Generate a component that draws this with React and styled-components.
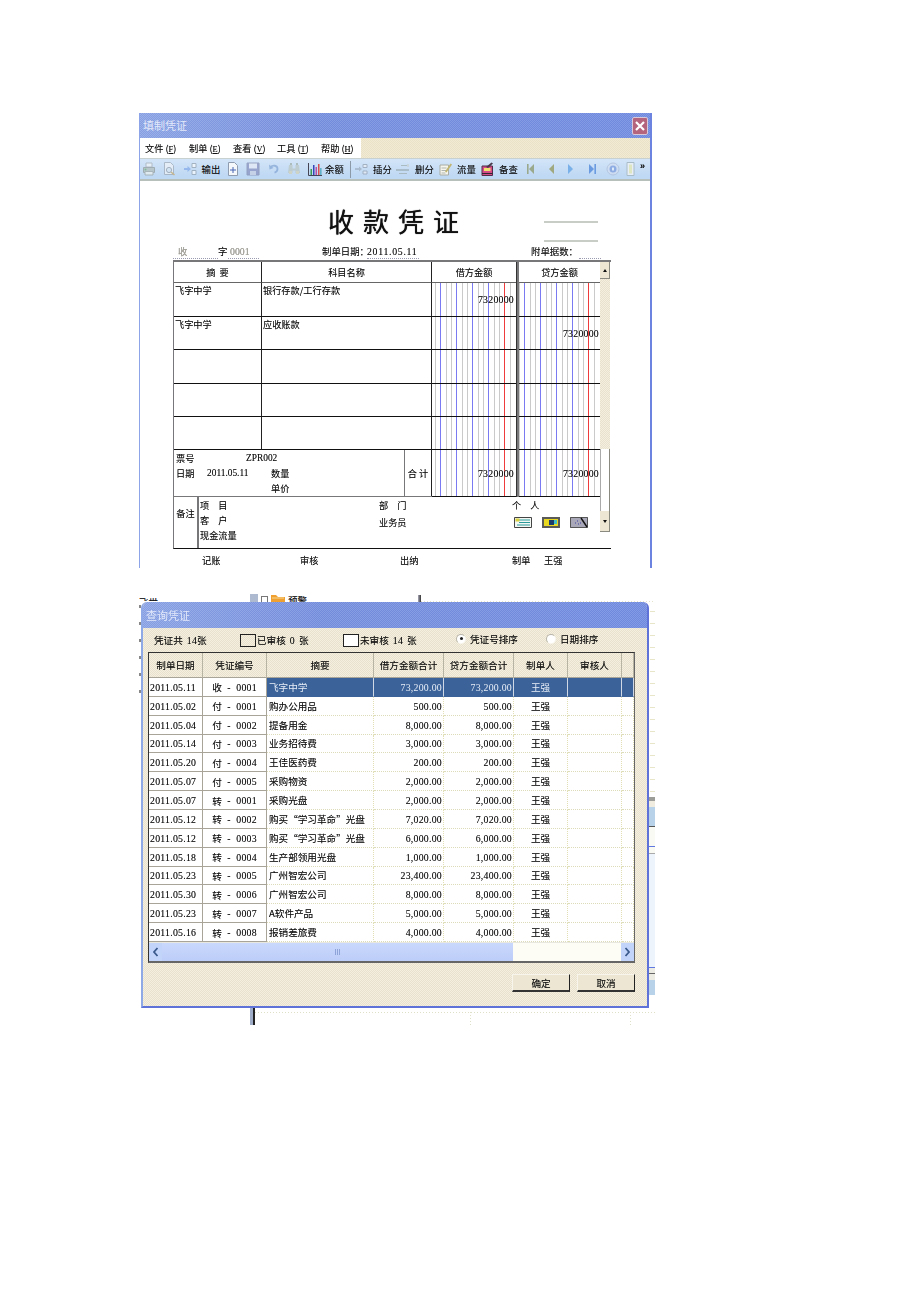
import React from 'react';
import styled, { createGlobalStyle } from 'styled-components';

const SANS = '"Noto Sans CJK SC", "Liberation Sans", sans-serif';
const NUM = '"Liberation Serif", "Noto Sans CJK SC", serif';
const BEIGE = 'repeating-conic-gradient(#f4efde 0 25%, #e7e1cd 0 50%) 0 0 / 2px 2px';
const TITLE_BLUE = 'repeating-conic-gradient(rgba(255,255,255,.10) 0 25%, rgba(40,60,170,.08) 0 50%) 0 0 / 2px 2px, linear-gradient(90deg, #8fa8e6, #7a93e0 35%, #7590e2)';

const GlobalStyle = createGlobalStyle`
  html, body { margin: 0; padding: 0; background: #fff; }
  body { font-family: ${SANS}; color: #111; text-shadow: 0 0 .5px rgba(0,0,0,.45); }
`;

const Page = styled.div`
  width: 920px;
  height: 1302px;
  box-sizing: border-box;
  padding: 113px 0 0 139px;
  background: #fff;
  overflow: hidden;
`;

/* ---------- first window ---------- */

const VoucherWindow = styled.div`
  width: 513px;
  height: 455px;
  box-sizing: border-box;
  display: flex;
  flex-direction: column;
  border-left: 1px solid #8ea4e8;
  border-right: 2px solid #6c84e0;
  overflow: hidden;
  filter: blur(0.3px);
`;

const TitleBar = styled.div`
  height: 25px;
  flex: none;
  display: flex;
  align-items: center;
  justify-content: space-between;
  padding: 0 2px 0 3px;
  background: ${TITLE_BLUE};
`;

const TitleText = styled.span`
  font-size: 11px;
  color: #e3e9fa;
  line-height: 1;
  text-shadow: none;
`;

const CloseBox = styled.div`
  width: 16px;
  height: 18px;
  display: flex;
  align-items: center;
  justify-content: center;
  background: #b4657d;
  border: 1px solid #d8c8d8;
  border-radius: 2px;
  box-sizing: border-box;
`;

const MenuBar = styled.div`
  height: 20px;
  flex: none;
  display: flex;
  background: repeating-conic-gradient(#f2ead2 0 25%, #e9e2c8 0 50%) 0 0 / 2px 2px;
`;

const MenuItems = styled.div`
  width: 221px;
  display: flex;
  align-items: center;
  padding-left: 5px;
  box-sizing: border-box;
  background: #fff;
  overflow: hidden;
`;

const MenuItem = styled.span`
  width: 44px;
  flex: none;
  font-size: 9.2px;
  white-space: nowrap;
  u { font: 8.4px ${NUM}; }
`;

const Toolbar = styled.div`
  height: 23px;
  flex: none;
  display: flex;
  align-items: center;
  box-sizing: border-box;
  background: linear-gradient(#d3e5f8, #bfd8f3 85%);
  border-bottom: 2px solid #b8c0bc;
  border-top: 1px solid #c8d0d0;
`;

const Tool = styled.div`
  width: ${p => p.$w}px;
  flex: none;
  display: flex;
  align-items: center;
  justify-content: center;
  gap: ${p => p.$gap ?? 5}px;
  font-size: 9.4px;
  white-space: nowrap;
  svg { opacity: ${p => (p.$soft ? 0.65 : 1)}; }
`;

const ToolSep = styled.div`
  width: 8px;
  height: 17px;
  flex: none;
  display: flex;
  justify-content: center;
  &::before { content: ''; width: 1px; background: #8c9aa8; }
`;

const Chevrons = styled.span`
  font: bold 9px "Liberation Sans", sans-serif;
  margin: -6px 0 0 1px;
`;

const VoucherBody = styled.div`
  flex: 1;
  padding-left: 33px;
  background: #fff;
`;

const HeadRow = styled.div`
  width: 438px;
  height: 62px;
  display: grid;
  grid-template-columns: 1fr auto 1fr;
`;

const Heading = styled.h1`
  grid-column: 2;
  margin: 21px 0 0 12px;
  font-size: 26px;
  line-height: 38px;
  font-weight: 400;
  letter-spacing: 9px;
  white-space: nowrap;
  text-shadow: 0 0 .8px #000;
`;

const RuleStack = styled.div`
  justify-self: end;
  margin: 40px 13px 0 0;
  width: 54px;
  display: flex;
  flex-direction: column;
  gap: 17px;
`;

const Rule = styled.div`
  height: 2px;
  background: #c8cec6;
`;

const MetaRow = styled.div`
  height: 17px;
  width: 438px;
  display: flex;
  align-items: center;
  font-size: 9.4px;
`;

const Field = styled.span`
  flex: none;
  width: ${p => p.$w}px;
  height: 14px;
  margin-left: ${p => p.$ml || 0}px;
  font-family: ${p => (p.$num ? NUM : SANS)};
  font-size: ${p => (p.$num ? '9.8px' : '9.4px')};
  letter-spacing: ${p => (p.$spread ? '.7px' : '0')};
  color: ${p => (p.$muted ? '#a8a69c' : '#111')};
  border-bottom: ${p => (p.$line ? '1px dotted #9a9ab0' : '1px solid transparent')};
  padding-left: ${p => p.$pl || 0}px;
  box-sizing: border-box;
  white-space: nowrap;
  line-height: 13px;
`;

const VoucherTable = styled.div`
  width: 438px;
  box-sizing: border-box;
  display: grid;
  grid-template-columns: 88px 170px 84px 3px 81px 10px;
  grid-template-rows: 21px 34px 33px 34px 33px 33px 47px 51px;
  border-top: 2px solid #77777a;
  border-left: 1px solid #77777a;
  border-bottom: 1px solid #111;
  font-size: 9.2px;
  line-height: 12px;
`;

const HeadCell = styled.div`
  display: flex;
  align-items: center;
  justify-content: center;
  border-bottom: 1px solid #666;
  border-right: ${p => (p.$open ? '0' : '1px solid #222')};
  white-space: pre;
`;

const TextCell = styled.div`
  grid-column: ${p => p.$col};
  grid-row: ${p => p.$row};
  padding: 1px 0 0 1px;
  border-bottom: 1px solid #111;
  border-right: 1px solid #222;
  white-space: nowrap;
`;

const Ruled = styled.div`
  grid-column: ${p => p.$col};
  grid-row: ${p => p.$row};
  position: relative;
  display: flex;
  align-items: center;
  justify-content: flex-end;
  padding-right: ${p => p.$pr}px;
  border-bottom: 1px solid #111;
  font: 9.8px ${NUM};
  letter-spacing: .25px;
`;

const RulingSvg = styled.svg`
  position: absolute;
  inset: 0;
  width: 100%;
  height: 100%;
`;

const Amount = styled.span`
  position: relative;
`;

// every 16px one blue line and two grey ones, the red one replaces the fifth blue
const Ruling = ({ o }) => {
  const lines = [];
  for (let x = o; x < 84; x += 16) {
    lines.push([x - 5, '#cacaca'], [x + 6, '#cacaca']);
    lines.push([x, x === o + 64 ? '#ef3b3b' : '#7a7af2']);
  }
  return (
    <RulingSvg shapeRendering="crispEdges">
      {lines.map(([x, c], i) => <line key={i} x1={x + 0.5} x2={x + 0.5} y1="0" y2="100%" stroke={c} />)}
    </RulingSvg>
  );
};

const MoneyCell = ({ o, pr, col, row, children }) => (
  <Ruled $pr={pr} $col={col} $row={row}>
    <Ruling o={o} />
    <Amount>{children}</Amount>
  </Ruled>
);

const Gutter = styled.div`
  grid-column: 4;
  grid-row: ${p => p.$row};
  background: #77777a;
  border-left: 1px solid #333;
`;

const VScroll = styled.div`
  grid-column: 6;
  grid-row: 1 / span 8;
  height: 270px;
  display: flex;
  flex-direction: column;
`;

const VArrow = styled.div`
  flex: none;
  height: ${p => p.$h}px;
  display: flex;
  align-items: center;
  justify-content: center;
  background: #ece6d2;
  border-right: 1px solid #8a8a80;
  border-bottom: 1px solid #8a8a80;
  &::before {
    content: '';
    border-left: 2.5px solid transparent;
    border-right: 2.5px solid transparent;
    ${p => (p.$up ? 'border-bottom: 3px solid #111;' : 'border-top: 3px solid #111;')}
  }
`;

const VTrack = styled.div`
  flex: ${p => (p.$fill ? 1 : 'none')};
  height: ${p => (p.$fill ? 'auto' : '170px')};
  background: ${p => (p.$fill ? '#fff' : BEIGE)};
  border-right: ${p => (p.$fill ? '1px solid #8a8a80' : '0')};
  border-left: ${p => (p.$fill ? '1px solid #aaa' : '0')};
`;

const TotalInfo = styled.div`
  grid-column: 1 / span 2;
  grid-row: 7;
  display: grid;
  grid-template-columns: 231px 1fr;
  border-bottom: 1px solid #77777a;
`;

const TicketBox = styled.div`
  display: grid;
  grid-template-columns: 31px 39px 25px 1fr;
  grid-auto-rows: 15px;
  align-content: center;
  align-items: center;
  padding-left: 2px;
  border-right: 1px solid #77777a;
`;

const TicketValue = styled.span`
  grid-column: ${p => p.$col};
  font: 9.4px ${NUM};
  white-space: nowrap;
`;

const TicketLabel = styled.span`
  grid-column: ${p => p.$col};
`;

const SumLabel = styled.div`
  display: flex;
  align-items: center;
  justify-content: center;
  white-space: pre;
  border-right: 1px solid #222;
`;

const Notes = styled.div`
  grid-column: 1 / span 5;
  grid-row: 8;
  display: flex;
`;

const NotesTag = styled.div`
  width: 25px;
  flex: none;
  box-sizing: border-box;
  padding-top: 10px;
  text-align: center;
  border-right: 2px solid #77777a;
`;

const NotesColumn = styled.div`
  width: ${p => p.$w}px;
  flex: none;
  display: flex;
  flex-direction: column;
  align-items: flex-start;
  gap: ${p => p.$gap}px;
  padding: 2px 0 0 ${p => p.$pl || 0}px;
  box-sizing: border-box;
  white-space: pre;
`;

const Spaced = styled.span`
  letter-spacing: 9px;
`;

const NoteIcons = styled.div`
  display: flex;
  gap: 10px;
  margin: 0 0 0 2px;
`;

const SignRow = styled.div`
  height: 22px;
  display: flex;
  align-items: center;
  padding: 0 0 0 29px;
  font-size: 9.2px;
`;

const Sign = styled.span`
  width: ${p => p.$w}px;
  flex: none;
`;

/* ---------- second window over the desktop scraps ---------- */

const Stage = styled.div`
  position: relative;
  width: 520px;
  height: 445px;
  margin: 17px 0 0 -4px;
  overflow: hidden;
`;

const Scrap = styled.div`
  position: absolute;
  left: ${p => p.$x}px;
  top: ${p => p.$y}px;
  width: ${p => p.$w}px;
  height: ${p => p.$h}px;
  overflow: hidden;
  background: ${p => p.$bg || 'transparent'};
  font-size: 9.5px;
  line-height: 12px;
  white-space: nowrap;
`;

const TreeRow = styled.div`
  display: flex;
  align-items: flex-start;
  gap: 3px;
`;

const TreeBar = styled.i`
  width: 8px;
  height: 12px;
  background: #aebad0;
`;

const TreeBox = styled.i`
  width: 7px;
  height: 12px;
  margin-top: 2px;
  border: 1px solid #777;
  box-sizing: border-box;
`;

const StripPart = styled.div`
  height: ${p => p.$h}px;
  background: ${p => p.$c};
`;

const QueryDialog = styled.div`
  position: relative;
  width: 508px;
  height: 406px;
  margin: 17px 0 0 6px;
  box-sizing: border-box;
  display: flex;
  flex-direction: column;
  border-left: 2px solid #8fa8e6;
  border-right: 2px solid #5f72d8;
  border-bottom: 2px solid #5f72d8;
  border-radius: 6px 6px 0 0;
  background: ${BEIGE};
  overflow: hidden;
  filter: blur(0.3px);
`;

const DialogTitle = styled.div`
  height: 26px;
  flex: none;
  display: flex;
  align-items: center;
  padding-left: 3px;
  background: ${TITLE_BLUE};
`;

const InfoRow = styled.div`
  height: 24px;
  flex: none;
  display: flex;
  align-items: center;
  padding-left: 11px;
  font-size: 9.6px;
  white-space: nowrap;
`;

const InfoItem = styled.div`
  width: ${p => p.$w}px;
  flex: none;
  display: flex;
  align-items: center;
  gap: ${p => p.$gap || 0}px;
  margin-top: ${p => (p.$up ? '-3px' : '0')};
  b { font: 400 9.8px ${NUM}; letter-spacing: .25px; margin: 0 ${p => (p.$close ? 0 : 4)}px 0 4px; }
`;

const FlagBox = styled.span`
  width: 16px;
  height: 13px;
  flex: none;
  box-sizing: border-box;
  border: 1px solid #222;
  background: ${p => (p.$on ? '#fff' : 'transparent')};
  margin-right: 1px;
`;

const Radio = styled.span`
  width: 10px;
  height: 10px;
  flex: none;
  box-sizing: border-box;
  border-radius: 50%;
  background: #fff;
  border: 1px solid;
  border-color: #b8b4a8 #f8f6ee #f8f6ee #b8b4a8;
  display: flex;
  align-items: center;
  justify-content: center;
  &::before {
    content: '';
    width: 3px;
    height: 3px;
    border-radius: 50%;
    background: ${p => (p.$on ? '#222' : 'transparent')};
  }
`;

const ListFrame = styled.div`
  width: 487px;
  height: 311px;
  flex: none;
  margin-left: 5px;
  box-sizing: border-box;
  border: 1px solid #333;
  border-right-color: #666;
  border-bottom: 2px solid #666;
  display: flex;
  flex-direction: column;
  background: #fff;
`;

const Sheet = styled.div`
  flex: 1;
  display: grid;
  grid-template-columns: 54px 64px 107px 70px 70px 54px 54px 1fr;
  grid-template-rows: 25px repeat(14, 1fr);
`;

const SheetHead = styled.div`
  display: flex;
  align-items: center;
  justify-content: center;
  font-size: 9.6px;
  background: ${BEIGE};
  border-right: 1px solid #b8b4a4;
  border-bottom: 1px solid #a8a498;
`;

const RowHead = styled.div`
  display: flex;
  align-items: center;
  justify-content: ${p => (p.$center ? 'center' : 'flex-start')};
  padding: 1px 0 0 ${p => (p.$center ? 0 : 1)}px;
  background: #fff;
  font: 9.8px ${NUM};
  letter-spacing: .25px;
  white-space: pre;
  border-right: 1px solid #a8a498;
  border-bottom: 1px solid #a8a498;
  span { font: 9.6px ${SANS}; }
`;

const SheetCell = styled.div`
  display: flex;
  align-items: center;
  justify-content: ${p => (p.$align === 'right' ? 'flex-end' : p.$align === 'center' ? 'center' : 'flex-start')};
  padding: ${p => (p.$align === 'right' ? '1px 1px 0 0' : p.$align === 'center' ? '0' : '0 0 0 2px')};
  font: ${p => (p.$num ? `9.8px ${NUM}` : `9.6px ${SANS}`)};
  letter-spacing: ${p => (p.$num ? '.25px' : '0')};
  white-space: nowrap;
  background: ${p => (p.$sel ? '#3b6399' : '#fff')};
  color: ${p => (p.$sel ? '#e8eef8' : '#111')};
  text-shadow: ${p => (p.$sel ? 'none' : 'inherit')};
  border-right: 1px ${p => (p.$sel ? 'solid #cfd8e4' : 'dotted #e2dfb4')};
  border-bottom: 1px ${p => (p.$sel ? 'solid #3b6399' : 'dotted #dcdcb8')};
`;

const HScroll = styled.div`
  height: 18px;
  flex: none;
  display: flex;
  background: #fdfdf6;
  border-top: 1px solid #e8e8e0;
`;

const HArrow = styled.div`
  width: 13px;
  flex: none;
  display: flex;
  align-items: center;
  justify-content: center;
  background: #c3d4fb;
  margin-left: ${p => (p.$end ? 'auto' : 0)};
`;

const HThumb = styled.div`
  width: 351px;
  flex: none;
  display: flex;
  align-items: center;
  justify-content: center;
  background: linear-gradient(#c9d8fc, #bccdf8);
  &::before {
    content: '';
    width: 5px;
    height: 6px;
    background: repeating-linear-gradient(90deg, #8ea3d8 0 1px, transparent 1px 2px);
  }
`;

const DialogActions = styled.div`
  display: flex;
  justify-content: flex-end;
  gap: 7px;
  padding: 11px 12px 0 0;
`;

const ActionButton = styled.div`
  width: 58px;
  height: 18px;
  box-sizing: border-box;
  display: flex;
  align-items: center;
  justify-content: center;
  font-size: 9.6px;
  background: #ece6d2;
  border-top: 1px solid #f8f6ec;
  border-left: 1px solid #f8f6ec;
  border-right: 1px solid #222;
  border-bottom: 2px solid #333;
`;

/* ---------- toolbar drawings ---------- */

const Ico = ({ w = 14, h = 14, vb, children }) => (
  <svg width={w} height={h} viewBox={vb || `0 0 ${w} ${h}`} style={{ flex: 'none', display: 'block' }}>{children}</svg>
);

const PrinterIcon = () => (
  <Ico>
    <path d="M4 1h6v4H4z" fill="#f4f6f8" stroke="#a0a8ae" />
    <path d="M1.5 5.5h11v5h-11z" fill="#aebab4" stroke="#8a9490" />
    <path d="M3 9.5h8v3.5H3z" fill="#eef2ee" stroke="#98a09c" />
    <circle cx="3.5" cy="7.5" r="1" fill="#5fae6c" />
  </Ico>
);
const PreviewIcon = () => (
  <Ico>
    <path d="M2.5 .5h6l3 3v9h-9z" fill="#f2f5f8" stroke="#9aa4b0" />
    <circle cx="7" cy="8" r="2.6" fill="#dbe8f4" stroke="#8d96a0" />
    <path d="M9 10l3.5 3" stroke="#c6a35c" strokeWidth="1.6" />
  </Ico>
);
const OutputIcon = () => (
  <Ico w={13} h={14}>
    <path d="M0 6h3.5V4L7 7 3.5 10V8H0z" fill="#7ba4e8" />
    <path d="M8 1.5h4v4H8zM8 8.5h4v4H8z" fill="#fff" stroke="#8d9aa6" />
  </Ico>
);
const NewDocIcon = () => (
  <Ico w={12}>
    <path d="M1.5 .5h6l3 3v10h-9z" fill="#f5f8fb" stroke="#8f9cb0" />
    <path d="M6 5v6M3 8h6" stroke="#4866b4" />
  </Ico>
);
const SaveIcon = () => (
  <Ico>
    <path d="M1 1h12v12H1z" fill="#7f86b8" stroke="#7a80a8" />
    <path d="M3 1.5h8v5H3z" fill="#e8ecf4" />
    <path d="M4 9h6v4H4z" fill="#c6cce0" />
  </Ico>
);
const UndoIcon = () => (
  <Ico w={12}>
    <path d="M2.5 5.5C4.5 2.8 9.5 3 9.5 7c0 2-1.5 3.2-3 3.6" fill="none" stroke="#7b9ed0" strokeWidth="1.8" />
    <path d="M1 2.5l.5 5 4-1.5z" fill="#7b9ed0" />
  </Ico>
);
const BinocularIcon = () => (
  <Ico>
    <path d="M2 3h3.5v3.5h3V3H12l1 8H8.5V8.5h-3V11H1z" fill="#b9c4bc" />
    <path d="M3 1h2v2H3zM9 1h2v2H9z" fill="#9aa89e" />
    <path d="M2 9h3v3H2zM9 9h3v3H9z" fill="#d4d0b0" />
  </Ico>
);
const ChartIcon = () => (
  <Ico>
    <path d="M.5 1v12.5H14" fill="none" stroke="#445" />
    <path d="M2.5 7H4v6H2.5z" fill="#3c9a58" />
    <path d="M5 3h1.500v10H5z" fill="#3646b8" />
    <path d="M7.500 5H9v8H7.500z" fill="#b850a8" />
    <path d="M10 2h1.500v11H10z" fill="#d8504c" />
    <path d="M12.200 6h1.300v7h-1.300z" fill="#48a8c0" />
  </Ico>
);
const InsertIcon = () => (
  <Ico w={13}>
    <path d="M0 7h5" stroke="#8d98a8" strokeWidth="1.4" />
    <path d="M4 4.500L7 7l-3 2.500z" fill="#9aa8b8" />
    <path d="M8 2.500h4v3H8zM8 9h4v3H8z" fill="#eef2f6" stroke="#8d98a8" />
  </Ico>
);
const RemoveIcon = () => (
  <Ico w={14}>
    <path d="M0 8h13" stroke="#7c8a88" strokeWidth="1.2" />
    <path d="M5 3.500h6M3 11.500h8" stroke="#9aa8a6" strokeWidth="1.2" />
    <path d="M11 2h2v3h-2z" fill="#c8d0d0" />
  </Ico>
);
const FlowIcon = () => (
  <Ico w={13}>
    <path d="M1 3h8.500v10H1z" fill="#f6f6ee" stroke="#a8aca4" />
    <path d="M2.500 6h5M2.500 8.500h5M2.500 11h4" stroke="#b0b4b0" />
    <path d="M6 9.500L11.500 1.500 13 2.500 7.500 10.500z" fill="#c0b470" />
  </Ico>
);
const BookIcon = () => (
  <Ico w={13}>
    <path d="M1 4h10.500v9.500H1z" fill="#d64a88" stroke="#503048" />
    <path d="M3 6h6.500v3H3z" fill="#f0e070" />
    <path d="M5 5L10.500 .5l1.500 1L7 6z" fill="#483848" />
    <path d="M1 11.500h10.500" stroke="#302830" />
  </Ico>
);
const Step = ({ dir, bar, color }) => (
  <Ico w={10} h={14}>
    <path d={dir === 'l' ? 'M8 2v10L3 7z' : 'M2 2v10l5-5z'} fill={color} />
    {bar && <path d={dir === 'l' ? 'M1 2h1.600v10H1z' : 'M7.400 2H9v10H7.400z'} fill={color} />}
  </Ico>
);
const HelpIcon = () => (
  <Ico>
    <circle cx="7" cy="7" r="6" fill="#d4def0" stroke="#a8b8d4" />
    <circle cx="7" cy="7" r="3.500" fill="#6f92d8" />
    <path d="M6 5.500h2v3H6z" fill="#e8f0fa" />
  </Ico>
);
const ExitIcon = () => (
  <Ico w={10}>
    <path d="M1 .5h7v13H1z" fill="#e8eef6" stroke="#a8bcc8" />
    <path d="M3 2.500h3v9H3z" fill="#dde6c0" />
  </Ico>
);
const CloseIcon = () => (
  <svg width="10" height="10" viewBox="0 0 10 10"><path d="M1 1l8 8M9 1L1 9" stroke="#fff" strokeWidth="2.2" /></svg>
);
const ListNoteIcon = () => (
  <Ico w={18} h={11}>
    <path d="M.5.5h17v10H.5z" fill="#f4f8f4" stroke="#444" />
    <path d="M5 3h11M5 5.500h11M3 8h13" stroke="#2a9a9a" />
    <path d="M1.500 1.500h4v3h-4z" fill="#d8d040" />
  </Ico>
);
const BoardNoteIcon = () => (
  <Ico w={18} h={11}>
    <path d="M0 0h18v11H0z" fill="#5a5a58" />
    <path d="M2 2h14v7H2z" fill="#e8d820" />
    <path d="M7 3h5v5H7z" fill="#1a3a6a" />
    <path d="M12 3h3v4h-3z" fill="#40c0c8" />
  </Ico>
);
const ToolNoteIcon = () => (
  <Ico w={18} h={11}>
    <path d="M0 0h18v11H0z" fill="#a8a8b8" />
    <path d="M.5.5h17v10H.5z" fill="none" stroke="#555" />
    <path d="M11 1l6 9" stroke="#111" strokeWidth="1.4" />
    <path d="M5 6h1M7 4h1M8 7h1M10 6h1" stroke="#4040a0" />
  </Ico>
);
const FolderIcon = () => (
  <svg width="14" height="12" viewBox="0 0 14 12"><path d="M0 1h5l2 2h7v9H0z" fill="#f0a030" /><path d="M1 4h12" stroke="#f8d890" /></svg>
);
const Chevron = ({ left }) => (
  <svg width="7" height="10" viewBox="0 0 7 10"><path d={left ? 'M5.500 1L2 5l3.500 4' : 'M1.500 1L5 5 1.500 9'} fill="none" stroke="#3a5a8c" strokeWidth="1.8" /></svg>
);

/* ---------- data ---------- */

const menus = [['文件', 'F'], ['制单', 'E'], ['查看', 'V'], ['工具', 'T'], ['帮助', 'H']];

const tools = [
  { w: 18, icon: <PrinterIcon />, soft: true },
  { w: 21, icon: <PreviewIcon />, soft: true },
  { w: 46, icon: <OutputIcon />, text: '输出', soft: true },
  { w: 15, icon: <NewDocIcon /> },
  { w: 25, icon: <SaveIcon />, soft: true },
  { w: 17, icon: <UndoIcon />, soft: true },
  { w: 24, icon: <BinocularIcon />, soft: true },
  { w: 40, icon: <ChartIcon />, text: '余额', gap: 3 },
  { sep: true },
  { w: 39, icon: <InsertIcon />, text: '插分', soft: true },
  { w: 44, icon: <RemoveIcon />, text: '删分', soft: true },
  { w: 41, icon: <FlowIcon />, text: '流量' },
  { w: 43, icon: <BookIcon />, text: '备查' },
  { w: 20, icon: <Step dir="l" bar color="#9aa88c" /> },
  { w: 20, icon: <Step dir="l" color="#a0a880" /> },
  { w: 20, icon: <Step dir="r" color="#7ab0e8" /> },
  { w: 21, icon: <Step dir="r" bar color="#6a9ae0" /> },
  { w: 21, icon: <HelpIcon />, soft: true },
  { w: 16, icon: <ExitIcon /> },
];

const entries = [
  { summary: '飞字中学', account: '银行存款/工行存款', debit: '7320000' },
  { summary: '飞字中学', account: '应收账款', credit: '7320000' },
  {},
  {},
  {},
];

const vouchers = [
  ['2011.05.11', '收', '0001', '飞字中学', '73,200.00'],
  ['2011.05.02', '付', '0001', '购办公用品', '500.00'],
  ['2011.05.04', '付', '0002', '提备用金', '8,000.00'],
  ['2011.05.14', '付', '0003', '业务招待费', '3,000.00'],
  ['2011.05.20', '付', '0004', '王佳医药费', '200.00'],
  ['2011.05.07', '付', '0005', '采购物资', '2,000.00'],
  ['2011.05.07', '转', '0001', '采购光盘', '2,000.00'],
  ['2011.05.12', '转', '0002', '购买“学习革命”光盘', '7,020.00'],
  ['2011.05.12', '转', '0003', '购买“学习革命”光盘', '6,000.00'],
  ['2011.05.18', '转', '0004', '生产部领用光盘', '1,000.00'],
  ['2011.05.23', '转', '0005', '广州智宏公司', '23,400.00'],
  ['2011.05.30', '转', '0006', '广州智宏公司', '8,000.00'],
  ['2011.05.23', '转', '0007', 'A软件产品', '5,000.00'],
  ['2011.05.16', '转', '0008', '报销差旅费', '4,000.00'],
];

const sheetHeads = ['制单日期', '凭证编号', '摘要', '借方金额合计', '贷方金额合计', '制单人', '审核人', ''];

const VoucherSheet = () => (
  <VoucherTable>
    <HeadCell>摘  要</HeadCell>
    <HeadCell>科目名称</HeadCell>
    <HeadCell $open>借方金额</HeadCell>
    <Gutter $row={1} />
    <HeadCell $open>贷方金额</HeadCell>
    {entries.map((row, i) => (
      <React.Fragment key={i}>
        <TextCell $col={1} $row={i + 2}>{row.summary}</TextCell>
        <TextCell $col={2} $row={i + 2}>{row.account}</TextCell>
        <MoneyCell o={8} pr={2} col={3} row={i + 2}>{row.debit}</MoneyCell>
        <Gutter $row={i + 2} />
        <MoneyCell o={5} pr={1} col={5} row={i + 2}>{row.credit}</MoneyCell>
      </React.Fragment>
    ))}
    <TotalInfo>
      <TicketBox>
        <TicketLabel $col="1 / span 2">票号</TicketLabel>
        <TicketValue $col="3 / span 2">ZPR002</TicketValue>
        <TicketLabel $col="1">日期</TicketLabel>
        <TicketValue $col="2 / span 2">2011.05.11</TicketValue>
        <TicketLabel $col="4">数量</TicketLabel>
        <TicketLabel $col="4">单价</TicketLabel>
      </TicketBox>
      <SumLabel>合 计</SumLabel>
    </TotalInfo>
    <MoneyCell o={8} pr={2} col={3} row={7}>7320000</MoneyCell>
    <Gutter $row={7} />
    <MoneyCell o={5} pr={1} col={5} row={7}>7320000</MoneyCell>
    <Notes>
      <NotesTag>备注</NotesTag>
      <NotesColumn $w={180} $gap={3} $pl={1}>
        <Spaced>项目</Spaced>
        <Spaced>客户</Spaced>
        <span>现金流量</span>
      </NotesColumn>
      <NotesColumn $w={133} $gap={5}>
        <Spaced>部门</Spaced>
        <span>业务员</span>
      </NotesColumn>
      <NotesColumn $w={85} $gap={6}>
        <Spaced>个人</Spaced>
        <NoteIcons>
          <ListNoteIcon />
          <BoardNoteIcon />
          <ToolNoteIcon />
        </NoteIcons>
      </NotesColumn>
    </Notes>
    <VScroll>
      <VArrow $h={16} $up />
      <VTrack />
      <VTrack $fill />
      <VArrow $h={20} />
    </VScroll>
  </VoucherTable>
);

const App = () => (
  <Page>
    <GlobalStyle />
    <VoucherWindow>
      <TitleBar>
        <TitleText>填制凭证</TitleText>
        <CloseBox><CloseIcon /></CloseBox>
      </TitleBar>
      <MenuBar>
        <MenuItems>
          {menus.map(([label, key]) => (
            <MenuItem key={key}>{label} (<u>{key}</u>)</MenuItem>
          ))}
        </MenuItems>
      </MenuBar>
      <Toolbar>
        {tools.map((t, i) => (t.sep ? <ToolSep key={i} /> : (
          <Tool key={i} $w={t.w} $gap={t.gap} $soft={t.soft}>{t.icon}{t.text}</Tool>
        )))}
        <Chevrons>»</Chevrons>
      </Toolbar>
      <VoucherBody>
        <HeadRow>
          <Heading>收款凭证</Heading>
          <RuleStack><Rule /><Rule /></RuleStack>
        </HeadRow>
        <MetaRow>
          <Field $w={45} $line $muted $pl={5}>收</Field>
          <Field $w={10}>字</Field>
          <Field $w={31} $line $muted $num $pl={2}>0001</Field>
          <Field $w={45} $ml={63}>制单日期：</Field>
          <Field $w={52} $line $num $spread>2011.05.11</Field>
          <Field $w={48} $ml={112}>附单据数：</Field>
          <Field $w={22} $line />
        </MetaRow>
        <VoucherSheet />
        <SignRow>
          <Sign $w={98}>记账</Sign>
          <Sign $w={100}>审核</Sign>
          <Sign $w={112}>出纳</Sign>
          <Sign $w={32}>制单</Sign>
          <Sign $w={30}>王强</Sign>
        </SignRow>
      </VoucherBody>
    </VoucherWindow>

    <Stage>
      <Scrap $x={4} $y={11} $w={20} $h={5}>飞世</Scrap>
      <Scrap $x={115} $y={9} $w={80} $h={10}>
        <TreeRow>
          <TreeBar />
          <TreeBox />
          <FolderIcon />
          <span>预警</span>
        </TreeRow>
      </Scrap>
      <Scrap $x={283} $y={10} $w={3} $h={9} $bg="linear-gradient(90deg, #aab, #333)" />
      <Scrap $x={286} $y={16} $w={234} $h={1} $bg="repeating-linear-gradient(90deg, #e4e2c8 0 1px, transparent 1px 3px)" />
      <Scrap $x={4} $y={20} $w={2} $h={100} $bg="repeating-linear-gradient(#888 0 3px, transparent 3px 17px)" />
      <Scrap $x={515} $y={26} $w={5} $h={185} $bg="repeating-linear-gradient(#e8e6c8 0 1px, transparent 1px 12px)" />
      <Scrap $x={514} $y={212} $w={6} $h={198}>
        <StripPart $h={4} $c="#9c9c98" />
        <StripPart $h={6} $c="#f0ece0" />
        <StripPart $h={19} $c="#b8d2ea" />
        <StripPart $h={1} $c="#555" />
        <StripPart $h={19} $c="#fafaf4" />
        <StripPart $h={1} $c="#6078e0" />
        <StripPart $h={6} $c="#fafaf4" />
        <StripPart $h={1} $c="#aaa" />
        <StripPart $h={113} $c="#eef4fc" />
        <StripPart $h={1} $c="#6078e0" />
        <StripPart $h={5} $c="#ecece4" />
        <StripPart $h={1} $c="#666" />
        <StripPart $h={6} $c="#ecece4" />
        <StripPart $h={18} $c="#b8d2ea" />
        <StripPart $h={1} $c="#555" />
      </Scrap>
      <Scrap $x={115} $y={423} $w={5} $h={17} $bg="linear-gradient(90deg, #9fadc8 0 3px, #222 3px)" />
      <Scrap $x={120} $y={427} $w={400} $h={1} $bg="repeating-linear-gradient(90deg, #e0e0c8 0 1px, transparent 1px 3px)" />
      <Scrap $x={335} $y={427} $w={1} $h={13} $bg="repeating-linear-gradient(#e0e0c8 0 1px, transparent 1px 3px)" />
      <Scrap $x={495} $y={427} $w={1} $h={13} $bg="repeating-linear-gradient(#e0e0c8 0 1px, transparent 1px 3px)" />

      <QueryDialog>
        <DialogTitle><TitleText>查询凭证</TitleText></DialogTitle>
        <InfoRow>
          <InfoItem $w={86} $close>凭证共<b>14</b>张</InfoItem>
          <InfoItem $w={103}><FlagBox />已审核<b>0</b>张</InfoItem>
          <InfoItem $w={113}><FlagBox $on />未审核<b>14</b>张</InfoItem>
          <InfoItem $w={90} $gap={4} $up><Radio $on />凭证号排序</InfoItem>
          <InfoItem $w={60} $gap={4} $up><Radio />日期排序</InfoItem>
        </InfoRow>
        <ListFrame>
          <Sheet>
            {sheetHeads.map((h, i) => <SheetHead key={i}>{h}</SheetHead>)}
            {vouchers.map(([date, kind, no, summary, amount], i) => (
              <React.Fragment key={i}>
                <RowHead>{date}</RowHead>
                <RowHead $center><span>{kind}</span>  -  {no}</RowHead>
                <SheetCell $sel={i === 0}>{summary}</SheetCell>
                <SheetCell $sel={i === 0} $num $align="right">{amount}</SheetCell>
                <SheetCell $sel={i === 0} $num $align="right">{amount}</SheetCell>
                <SheetCell $sel={i === 0} $align="center">王强</SheetCell>
                <SheetCell $sel={i === 0} />
                <SheetCell $sel={i === 0} />
              </React.Fragment>
            ))}
          </Sheet>
          <HScroll>
            <HArrow><Chevron left /></HArrow>
            <HThumb />
            <HArrow $end><Chevron /></HArrow>
          </HScroll>
        </ListFrame>
        <DialogActions>
          <ActionButton>确定</ActionButton>
          <ActionButton>取消</ActionButton>
        </DialogActions>
      </QueryDialog>
    </Stage>
  </Page>
);

export default App;
